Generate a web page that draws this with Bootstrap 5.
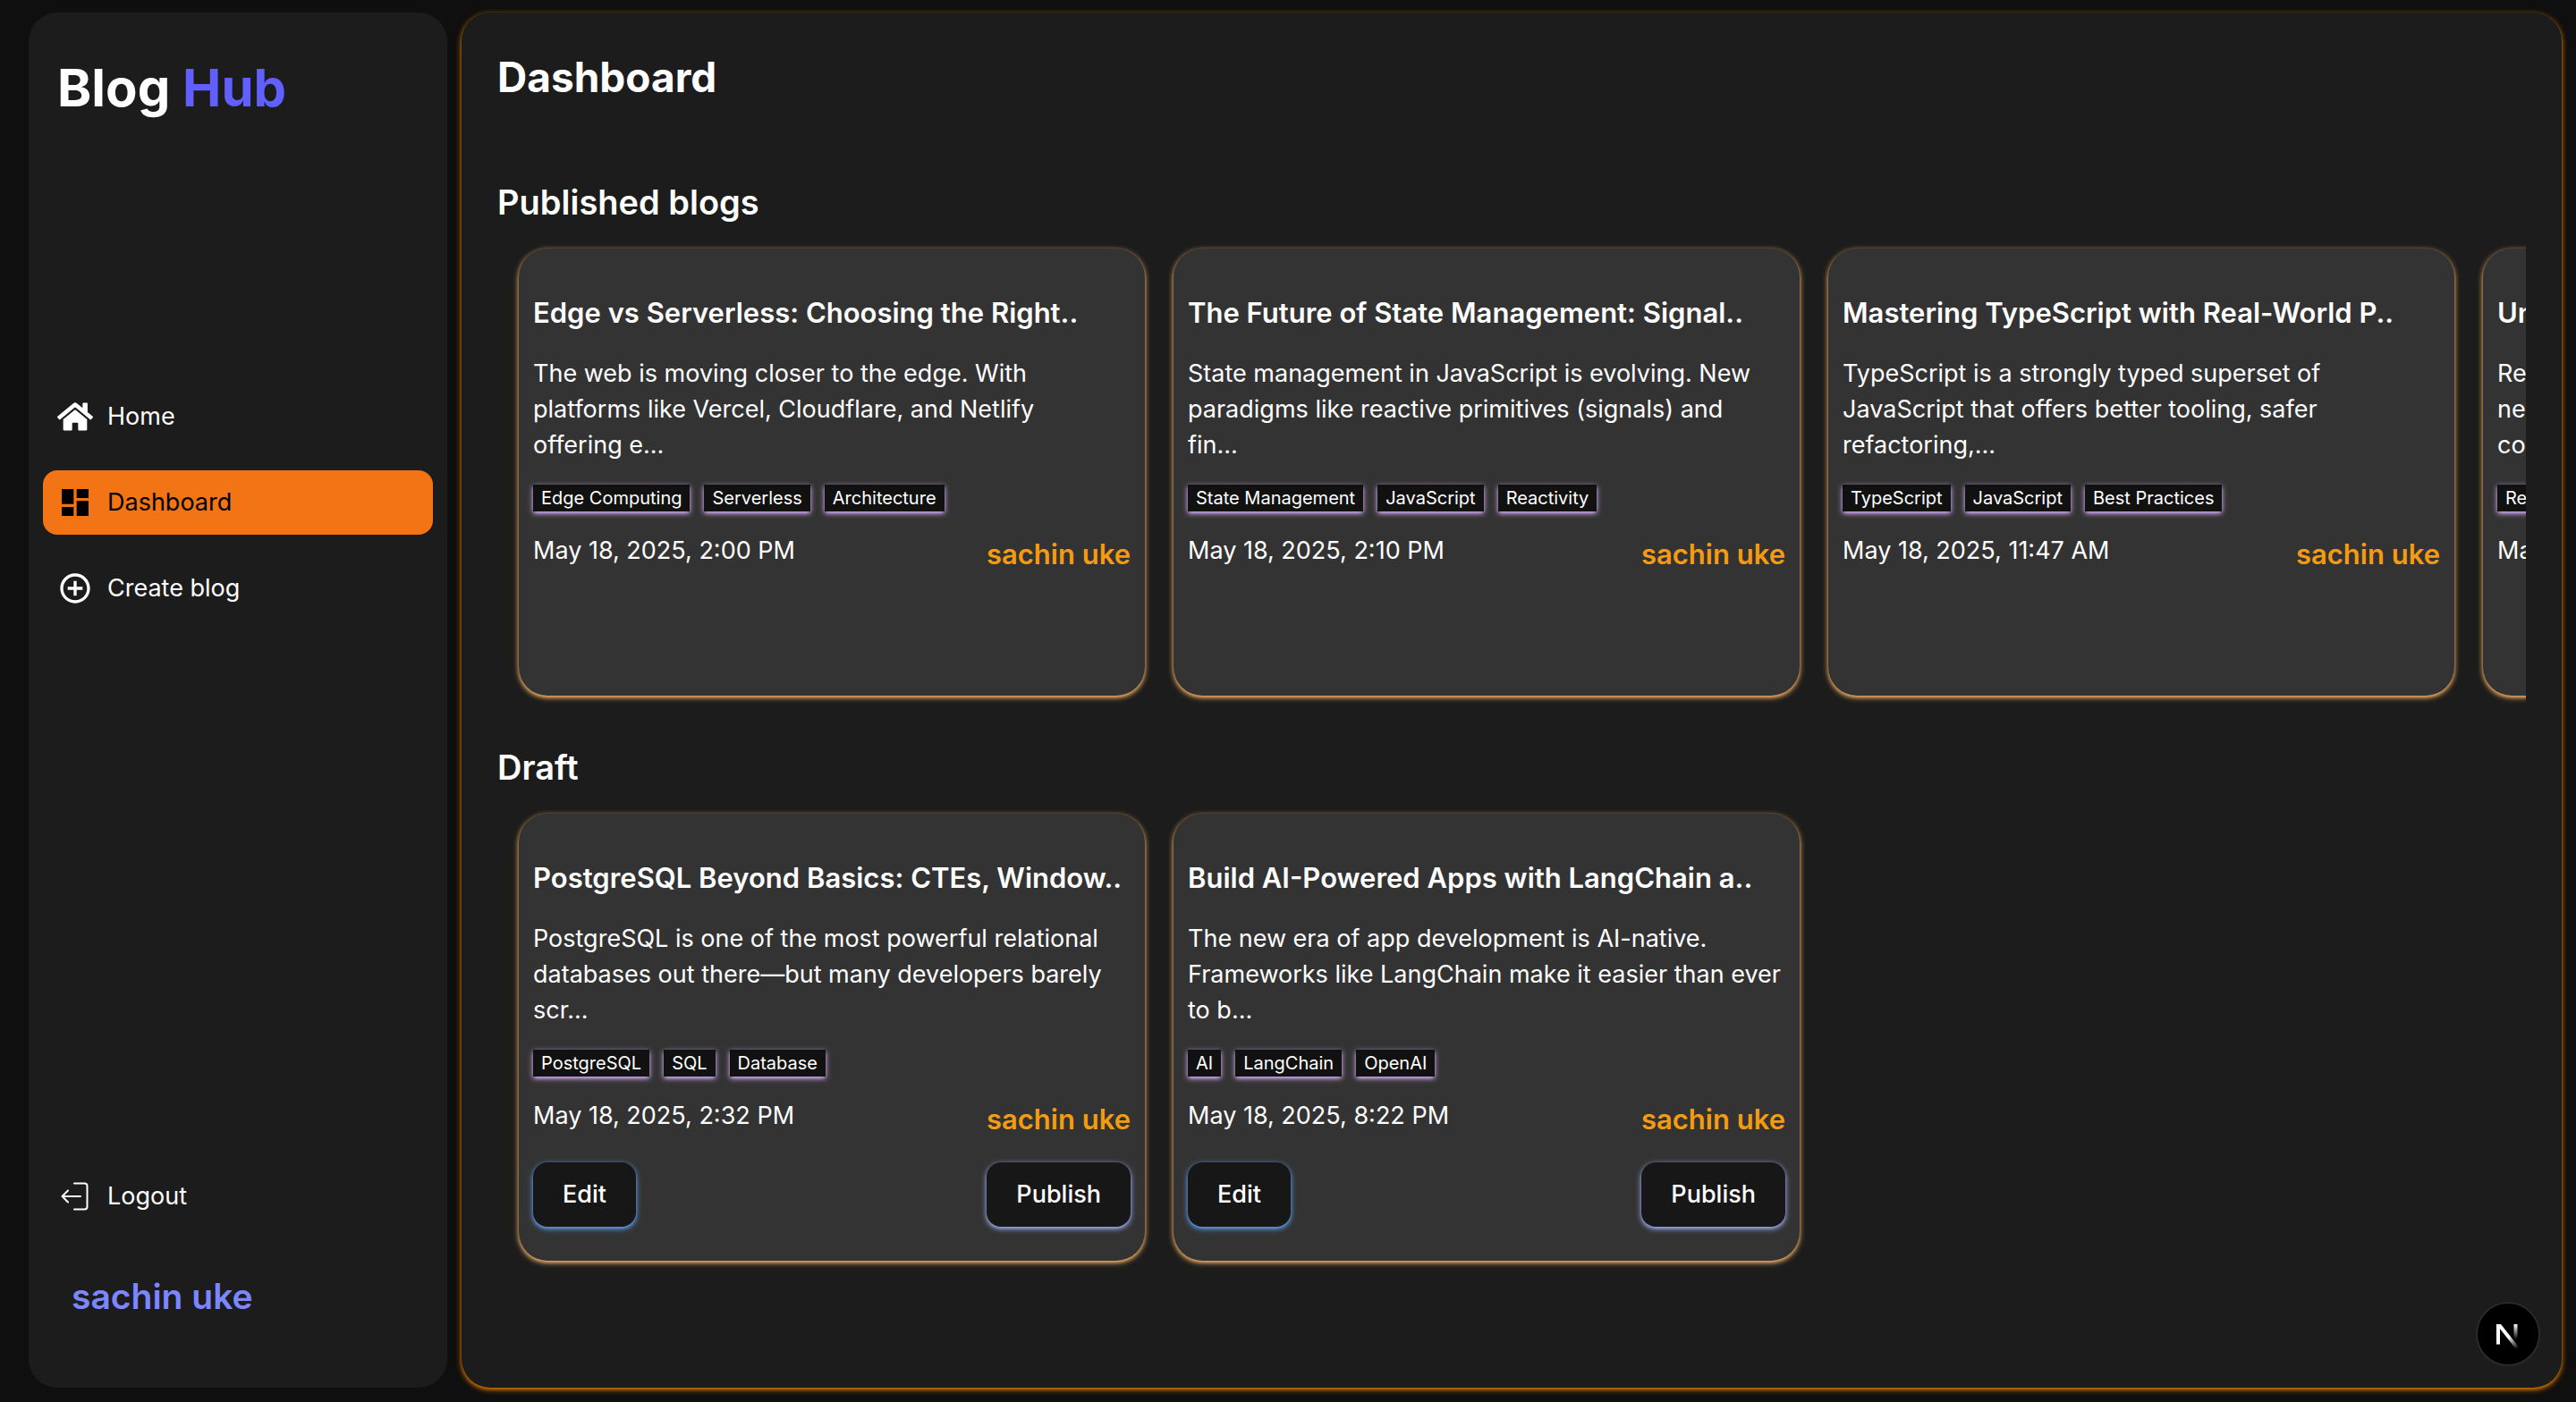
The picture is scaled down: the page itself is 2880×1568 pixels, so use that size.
<!DOCTYPE html>
<html lang="en">
<head>
<meta charset="utf-8">
<meta name="viewport" content="width=device-width, initial-scale=1">
<title>Blog Hub - Dashboard</title>
<link href="https://cdn.jsdelivr.net/npm/bootstrap@5.3.0/dist/css/bootstrap.min.css" rel="stylesheet">
<style>
  body { background: #0f0f0f; color: #fff; font-family: Inter, "Liberation Sans", sans-serif; font-size: 27px; line-height: 40px; }
  .shell { min-height: 100vh; padding: 14px 16px 16px 32px; gap: 16px; }
  .side { width: 468px; background: #1c1c1c; border-radius: 32px; padding: 48px 16px 74px; }
  .brand { font-size: 58px; line-height: 72px; font-weight: 700; padding-left: 16px; color: #fff; }
  .brand span { color: #615fff; }
  .side-menu { gap: 24px; margin-top: 296px; }
  .side-link { height: 72px; padding-left: 16px; gap: 16px; border-radius: 16px; color: #fff; background: transparent; border: 0; text-decoration: none; text-align: left; }
  .side-link.active { background: #f27414; color: #000; }
  .side-link svg { width: 40px; height: 40px; flex: none; }
  .user-name { color: #7c86ff; font-size: 39px; line-height: 56px; font-weight: 600; padding-left: 32px; margin-top: 48px; }
  .glow { box-shadow: 0 2px 6px var(--glow), 0 2px 4px -2px var(--glow); }
  .panel { --glow: #df7a00; min-width: 0; background: #1c1c1c; border-radius: 32px; padding: 40px; }
  .page-title { font-size: 46px; line-height: 64px; font-weight: 700; margin: 0 0 80px; }
  .section-title { font-size: 38px; line-height: 56px; font-weight: 600; margin: 0; }
  .track { gap: 32px; padding: 24px 0 28px 24px; overflow: hidden; }
  .post { --glow: #ffb86a; flex: 0 0 700px; height: 500px; padding: 48px 16px 0; border-radius: 32px; background: #333; }
  .post-title { font-size: 31px; line-height: 48px; font-weight: 600; margin: 0 0 24px; white-space: nowrap; }
  .post-text { margin: 0 0 24px; }
  .tags { gap: 16px; margin-bottom: 24px; }
  .tag { --glow: #dab2ff; background: #111; color: #fff; font-size: 20px; line-height: 30px; padding: 0 9px; }
  .author { color: #f39c12; font-size: 31px; line-height: 48px; font-weight: 600; }
  .act { height: 72px; padding: 0 33px; border: 0; border-radius: 16px; background: #171717; color: #fff; font-size: 27px; font-weight: 500; }
  .act-edit { --glow: #60a5fa; }
  .act-publish { --glow: #a3b3ff; }
  .actions { margin-top: 24px; }
  .dev-badge { position: fixed; right: 40px; bottom: 40px; width: 72px; height: 72px; border: 2px solid #2a2a2a; border-radius: 50%; background: #000; padding: 0; }
</style>
</head>
<body>
<div class="shell d-flex">
  <aside class="side d-flex flex-column flex-shrink-0">
    <a class="brand text-decoration-none" href="#">Blog <span>Hub</span></a>
    <nav class="side-menu d-flex flex-column">
      <a class="side-link d-flex align-items-center" href="#">
        <svg viewBox="0 0 576 512" fill="currentColor" aria-hidden="true"><path d="M280.400 148.300L96 300.100V464a16 16 0 0 0 16 16l112.100-.300a16 16 0 0 0 15.900-16V368a16 16 0 0 1 16-16h64a16 16 0 0 1 16 16v95.600a16 16 0 0 0 16 16.100L464 480a16 16 0 0 0 16-16V300L295.700 148.300a12.200 12.200 0 0 0-15.300 0zM571.600 251.500L488 182.600V44.100a12 12 0 0 0-12-12h-56a12 12 0 0 0-12 12v72.600L318.500 43a48 48 0 0 0-61 0L4.300 251.500a12 12 0 0 0-1.600 16.900l25.500 31A12 12 0 0 0 45.200 301l235.200-193.700a12.200 12.200 0 0 1 15.300 0L530.900 301a12 12 0 0 0 16.900-1.600l25.500-31a12 12 0 0 0-1.700-16.900z"/></svg>
        Home</a>
      <a class="side-link active d-flex align-items-center" href="#" aria-current="page">
        <svg viewBox="0 0 24 24" fill="currentColor" aria-hidden="true"><path d="M3 13h8V3H3v10zm0 8h8v-6H3v6zm10 0h8V11h-8v10zm0-18v6h8V3h-8z"/></svg>
        Dashboard</a>
      <a class="side-link d-flex align-items-center" href="#">
        <svg viewBox="0 0 24 24" fill="currentColor" aria-hidden="true"><path d="M13 7h-2v4H7v2h4v4h2v-4h4v-2h-4V7zm-1-5C6.480 2 2 6.480 2 12s4.480 10 10 10 10-4.480 10-10S17.520 2 12 2zm0 18c-4.410 0-8-3.590-8-8s3.590-8 8-8 8 3.590 8 8-3.590 8-8 8z"/></svg>
        Create blog</a>
    </nav>
    <button type="button" class="side-link d-flex align-items-center mt-auto">
      <svg viewBox="0 0 40 40" fill="none" stroke="currentColor" stroke-width="2" stroke-linecap="round" stroke-linejoin="round" aria-hidden="true"><path d="M19 5.500h11.500a3 3 0 0 1 3 3v23a3 3 0 0 1-3 3H19M26 20H5.500m6.500-6.500L5.500 20l6.500 6.500"/></svg>
      Logout</button>
    <div class="user-name">sachin uke</div>
  </aside>

  <main class="panel glow flex-grow-1">
    <h1 class="page-title">Dashboard</h1>
    <section>
      <h2 class="section-title">Published blogs</h2>
      <div class="track d-flex">
        <article class="post glow">
          <h3 class="post-title">Edge vs Serverless: Choosing the Right..</h3>
          <p class="post-text">The web is moving closer to the edge. With platforms like Vercel, Cloudflare, and Netlify<br>offering e...</p>
          <div class="tags d-flex"><span class="tag glow">Edge Computing</span><span class="tag glow">Serverless</span><span class="tag glow">Architecture</span></div>
          <div class="d-flex justify-content-between"><time>May 18, 2025, 2:00 PM</time><span class="author">sachin uke</span></div>
        </article>
        <article class="post glow">
          <h3 class="post-title">The Future of State Management: Signal..</h3>
          <p class="post-text">State management in JavaScript is evolving. New paradigms like reactive primitives (signals) and<br>fin...</p>
          <div class="tags d-flex"><span class="tag glow">State Management</span><span class="tag glow">JavaScript</span><span class="tag glow">Reactivity</span></div>
          <div class="d-flex justify-content-between"><time>May 18, 2025, 2:10 PM</time><span class="author">sachin uke</span></div>
        </article>
        <article class="post glow">
          <h3 class="post-title">Mastering TypeScript with Real-World P..</h3>
          <p class="post-text">TypeScript is a strongly typed superset of JavaScript that offers better tooling, safer refactoring,...</p>
          <div class="tags d-flex"><span class="tag glow">TypeScript</span><span class="tag glow">JavaScript</span><span class="tag glow">Best Practices</span></div>
          <div class="d-flex justify-content-between"><time>May 18, 2025, 11:47 AM</time><span class="author">sachin uke</span></div>
        </article>
        <article class="post glow">
          <h3 class="post-title">Un</h3>
          <p class="post-text">Re<br>ne<br>co</p>
          <div class="tags d-flex"><span class="tag glow">Re</span></div>
          <div class="d-flex justify-content-between"><time>Ma</time></div>
        </article>
      </div>
    </section>
    <section class="mt-4">
      <h2 class="section-title">Draft</h2>
      <div class="track d-flex">
        <article class="post glow">
          <h3 class="post-title">PostgreSQL Beyond Basics: CTEs, Window..</h3>
          <p class="post-text">PostgreSQL is one of the most powerful relational databases out there—but many developers barely scr...</p>
          <div class="tags d-flex"><span class="tag glow">PostgreSQL</span><span class="tag glow">SQL</span><span class="tag glow">Database</span></div>
          <div class="d-flex justify-content-between"><time>May 18, 2025, 2:32 PM</time><span class="author">sachin uke</span></div>
          <div class="actions d-flex justify-content-between"><button type="button" class="act act-edit glow">Edit</button><button type="button" class="act act-publish glow">Publish</button></div>
        </article>
        <article class="post glow">
          <h3 class="post-title">Build AI-Powered Apps with LangChain a..</h3>
          <p class="post-text">The new era of app development is AI-native. Frameworks like LangChain make it easier than ever to b...</p>
          <div class="tags d-flex"><span class="tag glow">AI</span><span class="tag glow">LangChain</span><span class="tag glow">OpenAI</span></div>
          <div class="d-flex justify-content-between"><time>May 18, 2025, 8:22 PM</time><span class="author">sachin uke</span></div>
          <div class="actions d-flex justify-content-between"><button type="button" class="act act-edit glow">Edit</button><button type="button" class="act act-publish glow">Publish</button></div>
        </article>
      </div>
    </section>
  </main>
</div>
<button type="button" class="dev-badge d-flex align-items-center justify-content-center" aria-label="Open developer tools">
  <svg width="72" height="72" viewBox="0 0 72 72" fill="none" class="flex-shrink-0" aria-hidden="true">
    <defs>
      <linearGradient id="diag" gradientUnits="userSpaceOnUse" x1="37" y1="39" x2="47" y2="52"><stop stop-color="#fff"/><stop offset="1" stop-color="#fff" stop-opacity="0"/></linearGradient>
      <linearGradient id="stem" gradientUnits="userSpaceOnUse" x1="45" y1="25" x2="45" y2="42"><stop stop-color="#fff"/><stop offset="1" stop-color="#fff" stop-opacity="0"/></linearGradient>
    </defs>
    <path fill="url(#diag)" d="M23 25h5l20 25.500-3 2.500L26.500 29.500z"/>
    <path fill="#fff" d="M23 25h4v22.500h-4z"/>
    <path fill="url(#stem)" d="M42.500 25h4v17h-4z"/>
  </svg>
</button>
<script src="https://cdn.jsdelivr.net/npm/bootstrap@5.3.0/dist/js/bootstrap.bundle.min.js"></script>
</body>
</html>
